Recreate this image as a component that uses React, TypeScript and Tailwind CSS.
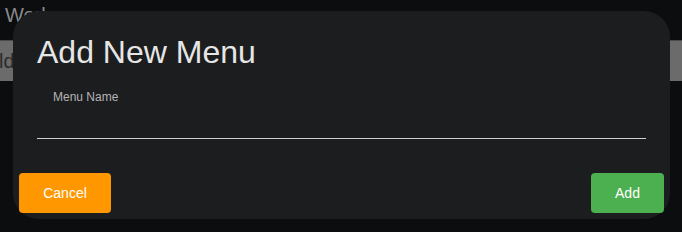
import React from "react"

export default function App() {
  return (
    <div
      className="relative h-[232px] w-[682px] overflow-hidden bg-[#0c0d0f]"
      style={{ fontFamily: '"Liberation Sans", Arial, sans-serif' }}
    >
      {/* page behind the modal */}
      <div className="pt-[3px] pl-[5px] text-[20px] leading-[24px] text-[#8a8a8c]">Workspace</div>
      <div className="mt-[13px] flex h-[41px] items-center border-t border-[#4a4a4a] bg-[#6b6b6b] text-[20px] text-[#2a2a2a]">
        <span className="-ml-[1px]">ld</span>
      </div>

      {/* modal */}
      <div className="absolute top-[11px] left-[13px] flex h-[208px] w-[657px] flex-col rounded-[26px] bg-[#1c1d1f]">
        <h2 className="px-6 pt-[23px] text-[32px] leading-[37px] text-[#e6e6e6]">Add New Menu</h2>
        <div className="mx-6 mt-[19px]">
          <label className="block pl-4 text-[12px] leading-[14px] text-[#b4b4b6]">Menu Name</label>
          <input className="mt-0 block h-[35px] w-full border-b border-[#cfd0d6] bg-transparent text-[14px] text-white outline-none" />
        </div>
        <div className="mt-auto flex items-center justify-between px-[6px] pb-[6px]">
          <button className="h-[40px] w-[92px] rounded-[4px] bg-[#ff9800] text-[14px] text-white">Cancel</button>
          <button className="h-[40px] w-[73px] rounded-[4px] bg-[#4caf50] text-[14px] text-white">Add</button>
        </div>
      </div>
    </div>
  )
}
